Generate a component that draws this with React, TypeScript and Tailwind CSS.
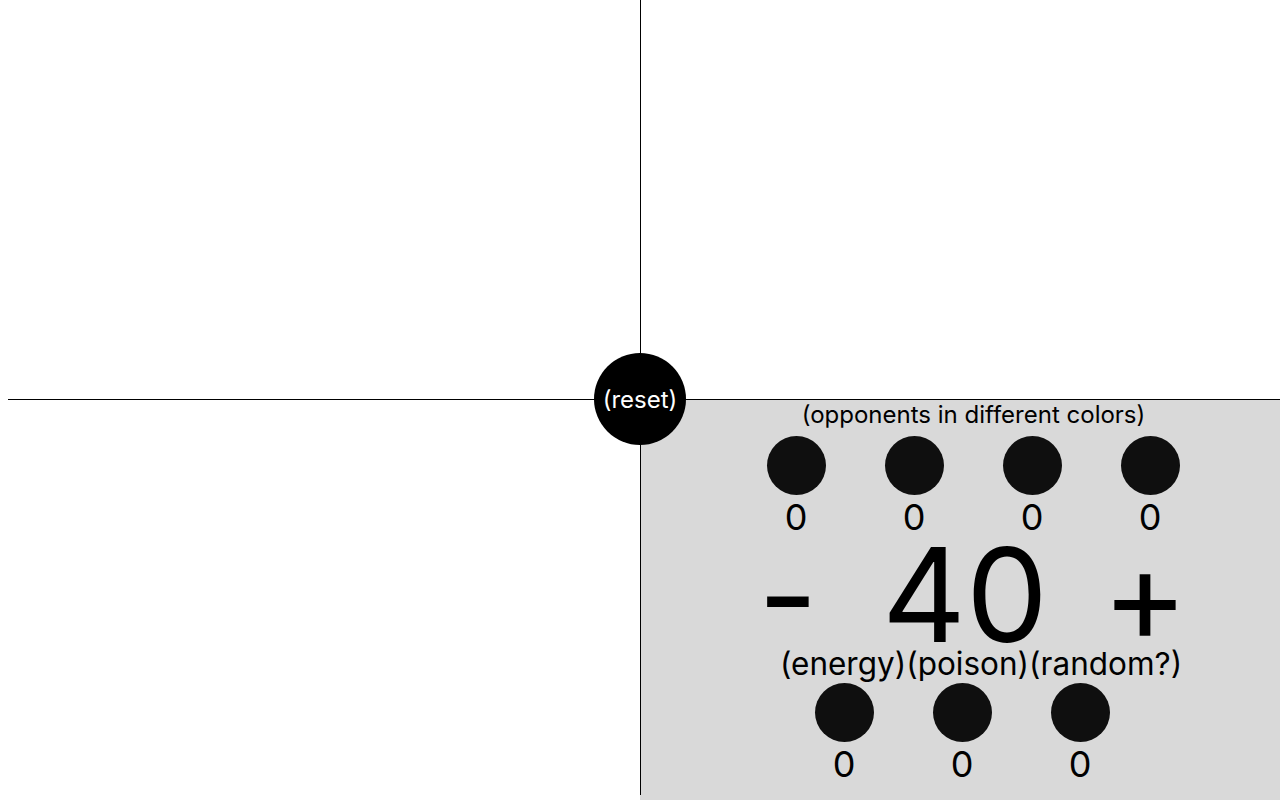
import React from 'react';

const opponents = [0, 0, 0, 0];
const counters = [0, 0, 0];

const Dot = () => <div className="w-[59px] h-[59px] rounded-full bg-[#0f0f0f]"></div>;

export default function App() {
  return (
    <div className="relative w-[1280px] h-[800px] overflow-hidden bg-white text-black font-['Inter','Liberation_Sans',sans-serif]">
      <div className="grid grid-cols-[640px_640px] grid-rows-[400px_400px]">
        {/* top left */}
        <div className="pl-2">
          <div className="h-full border-b border-black"></div>
        </div>
        {/* top right */}
        <div className="border-l border-b border-black"></div>
        {/* bottom left */}
        <div></div>
        {/* bottom right: player panel */}
        <div className="flex bg-[#d9d9d9]">
          <div className="w-px h-[395px] bg-black"></div>
          <div className="flex-1 flex flex-col">
            <p className="pl-[26px] pt-px h-[28px] text-center text-[24px] leading-[28px]">(opponents in different colors)</p>

            <div className="flex pl-[96px] mt-[8px]">
              {opponents.map((_, i) => (
                <div key={i} className="w-[118px] flex justify-center">
                  <Dot />
                </div>
              ))}
            </div>
            <div className="flex pl-[96px] mt-[6px]">
              {opponents.map((v, i) => (
                <div key={i} className="w-[118px] h-[32px] text-center text-[36px] leading-[32px]">{v}</div>
              ))}
            </div>

            {/* life total */}
            <div className="flex pl-[97px] mt-[12px] h-[100px] text-[130px] leading-[100px]">
              <span className="w-[100px] text-center">-</span>
              <span className="w-[200px] ml-[27px] text-center">40</span>
              <span className="w-[100px] ml-[30px] text-center">+</span>
            </div>

            <p className="pl-[41px] mt-[1px] h-[36px] text-center text-[31.5px] leading-[36px]">(energy)(poison)(random?)</p>

            <div className="flex pl-[144px] mt-[1px]">
              {counters.map((_, i) => (
                <div key={i} className="w-[118px] flex justify-center">
                  <Dot />
                </div>
              ))}
            </div>
            <div className="flex pl-[144px] mt-[6px]">
              {counters.map((v, i) => (
                <div key={i} className="w-[118px] h-[32px] text-center text-[36px] leading-[32px]">{v}</div>
              ))}
            </div>
          </div>
        </div>
      </div>

      {/* reset button over the centre */}
      <button className="absolute left-[594px] top-[353px] w-[92px] h-[92px] pt-[2px] rounded-full bg-black text-white text-[24px] leading-none flex items-center justify-center">
        (reset)
      </button>
    </div>
  );
}
